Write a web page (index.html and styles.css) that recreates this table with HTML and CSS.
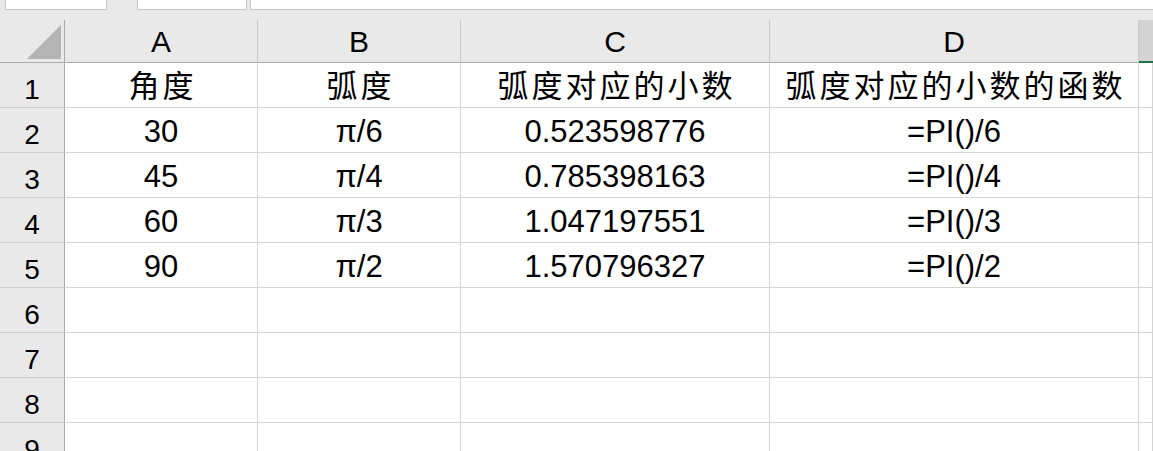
FILE: index.html
```html
<!DOCTYPE html>
<html lang="zh">
<head>
<meta charset="utf-8">
<title>Sheet</title>
<link rel="stylesheet" href="styles.css">
</head>
<body>
<div class="topbar">
  <div class="box box-name"></div>
  <div class="box box-fx"></div>
  <div class="box box-formula"></div>
</div>
<div class="sheet">
  <div class="corner"><span class="tri"></span></div>
  <div class="colhead">A</div>
  <div class="colhead">B</div>
  <div class="colhead">C</div>
  <div class="colhead">D</div>
  <div class="colhead colhead-sel"></div>

  <div class="rowhead">1</div>
  <div class="cell cjk">角度</div>
  <div class="cell cjk">弧度</div>
  <div class="cell cjk">弧度对应的小数</div>
  <div class="cell cjk">弧度对应的小数的函数</div>
  <div class="cell"></div>

  <div class="rowhead">2</div>
  <div class="cell">30</div>
  <div class="cell">π/6</div>
  <div class="cell">0.523598776</div>
  <div class="cell">=PI()/6</div>
  <div class="cell"></div>

  <div class="rowhead">3</div>
  <div class="cell">45</div>
  <div class="cell">π/4</div>
  <div class="cell">0.785398163</div>
  <div class="cell">=PI()/4</div>
  <div class="cell"></div>

  <div class="rowhead">4</div>
  <div class="cell">60</div>
  <div class="cell">π/3</div>
  <div class="cell">1.047197551</div>
  <div class="cell">=PI()/3</div>
  <div class="cell"></div>

  <div class="rowhead">5</div>
  <div class="cell">90</div>
  <div class="cell">π/2</div>
  <div class="cell">1.570796327</div>
  <div class="cell">=PI()/2</div>
  <div class="cell"></div>

  <div class="rowhead">6</div>
  <div class="cell"></div><div class="cell"></div><div class="cell"></div><div class="cell"></div><div class="cell"></div>

  <div class="rowhead">7</div>
  <div class="cell"></div><div class="cell"></div><div class="cell"></div><div class="cell"></div><div class="cell"></div>

  <div class="rowhead">8</div>
  <div class="cell"></div><div class="cell"></div><div class="cell"></div><div class="cell"></div><div class="cell"></div>

  <div class="rowhead">9</div>
  <div class="cell"></div><div class="cell"></div><div class="cell"></div><div class="cell"></div><div class="cell"></div>
</div>
</body>
</html>
```

FILE: styles.css
```css
* { box-sizing: border-box; }

html, body {
  margin: 0;
  padding: 0;
  width: 1153px;
  height: 451px;
  overflow: hidden;
  background: #ffffff;
  font-family: "Liberation Sans", "Noto Sans CJK SC", sans-serif;
  color: #000;
}

.topbar {
  height: 20px;
  background: #e9e9e9;
  display: flex;
  gap: 30px;
  padding-left: 5px;
}

.box {
  height: 10px;
  background: #ffffff;
  border: 1px solid #c6c6c6;
  border-top: none;
}

.box-name { width: 102px; }
.box-fx { width: 110px; margin-right: -27px; }
.box-formula { flex: 1; border-right: none; }

.sheet {
  display: grid;
  grid-template-columns: 65px 193px 203px 309px 369px 14px;
  grid-template-rows: 43px repeat(9, 45px);
}

.corner {
  background: #e9e9e9;
  border-right: 1px solid #ababab;
  border-bottom: 1px solid #ababab;
  position: relative;
}

.tri {
  position: absolute;
  left: 27px;
  top: 5px;
  width: 34px;
  height: 34px;
  background: #b4b4b4;
  clip-path: polygon(100% 0, 100% 100%, 0 100%);
}

.colhead {
  background: #e9e9e9;
  border-right: 1px solid #c9c9c9;
  border-bottom: 1px solid #ababab;
  text-align: center;
  font-size: 30px;
  line-height: 42px;
  padding-top: 1px;
}

.colhead-sel {
  background: #d3d3d3;
  border-right: none;
  border-bottom: 2px solid #217346;
}

.rowhead {
  background: #e9e9e9;
  border-right: 1px solid #ababab;
  border-bottom: 1px solid #cfcfcf;
  text-align: center;
  font-size: 28px;
  line-height: 44px;
  padding-top: 5px;
}

.cell {
  background: #ffffff;
  border-right: 1px solid #d4d4d4;
  border-bottom: 1px solid #d4d4d4;
  text-align: center;
  font-size: 31px;
  line-height: 44px;
  padding-top: 2px;
  white-space: nowrap;
  overflow: hidden;
}

.cjk {
  letter-spacing: 3px;
  text-indent: 3px;
}
```
